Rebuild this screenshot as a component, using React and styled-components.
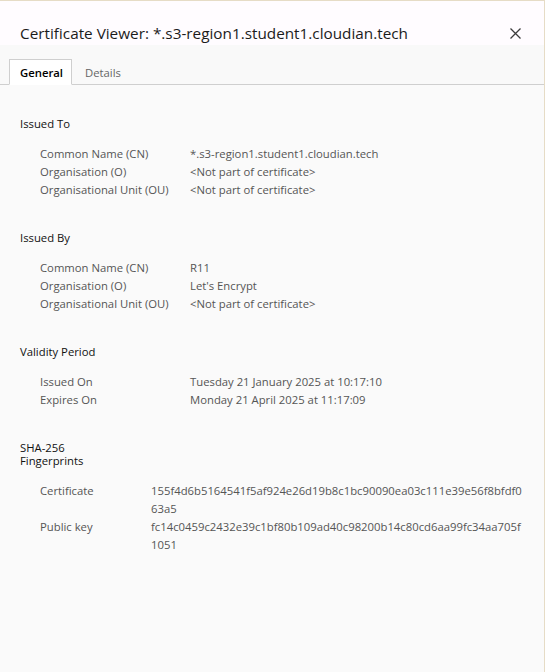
import styled, { createGlobalStyle } from "styled-components";

const GlobalStyle = createGlobalStyle`
  html, body {
    margin: 0;
    padding: 0;
    background: #fafafa;
  }
  * {
    box-sizing: border-box;
  }
`;

const sections = [
  {
    title: "Issued To",
    labelWidth: 150,
    rows: [
      ["Common Name (CN)", ["*.s3-region1.student1.cloudian.tech"]],
      ["Organisation (O)", ["<Not part of certificate>"]],
      ["Organisational Unit (OU)", ["<Not part of certificate>"]],
    ],
  },
  {
    title: "Issued By",
    labelWidth: 150,
    rows: [
      ["Common Name (CN)", ["R11"]],
      ["Organisation (O)", ["Let's Encrypt"]],
      ["Organisational Unit (OU)", ["<Not part of certificate>"]],
    ],
  },
  {
    title: "Validity Period",
    labelWidth: 150,
    rows: [
      ["Issued On", ["Tuesday 21 January 2025 at 10:17:10"]],
      ["Expires On", ["Monday 21 April 2025 at 11:17:09"]],
    ],
  },
  {
    title: "SHA-256 Fingerprints",
    labelWidth: 111,
    rows: [
      [
        "Certificate",
        ["155f4d6b5164541f5af924e26d19b8c1bc90090ea03c111e39e56f8bfdf0", "63a5"],
      ],
      [
        "Public key",
        ["fc14c0459c2432e39c1bf80b109ad40c98200b14c80cd6aa99fc34aa705f", "1051"],
      ],
    ],
  },
];

export default function App() {
  return (
    <>
      <GlobalStyle />
      <Dialog>
        <Header>
          <Title>Certificate Viewer: *.s3-region1.student1.cloudian.tech</Title>
          <CloseBtn aria-label="Close">
            <svg width="11" height="11" viewBox="0 0 11 11">
              <path d="M0.5 0.5 L10.5 10.5 M10.5 0.5 L0.5 10.5" stroke="#3c3c3c" strokeWidth="1.3" />
            </svg>
          </CloseBtn>
        </Header>
        <TabBar>
          <Tab $active>General</Tab>
          <Tab>Details</Tab>
        </TabBar>
        <Content>
          {sections.map((section) => (
            <Section key={section.title}>
              <Heading>{section.title}</Heading>
              <Rows>
                {section.rows.map(([label, lines]) => (
                  <Row key={label} $labelWidth={section.labelWidth}>
                    <Label>{label}</Label>
                    <Value>
                      {lines.map((line) => (
                        <ValueLine key={line}>{line}</ValueLine>
                      ))}
                    </Value>
                  </Row>
                ))}
              </Rows>
            </Section>
          ))}
        </Content>
      </Dialog>
    </>
  );
}

const Dialog = styled.div`
  width: 545px;
  height: 672px;
  display: flex;
  flex-direction: column;
  background: #fafafa;
  border-top: 1px solid #e6dcc6;
  border-right: 1px solid #e6dcc6;
  font-family: "Open Sans", "Noto Sans", sans-serif;
  overflow: hidden;
`;

const Header = styled.div`
  height: 44px;
  display: flex;
  align-items: center;
  justify-content: space-between;
  padding: 16px 22px 0 20px;
  background: #fffcff;
`;

const Title = styled.h1`
  margin: 4px 0 0;
  font-size: 15.3px;
  font-weight: 400;
  color: #1b1b1b;
`;

const CloseBtn = styled.button`
  width: 14px;
  height: 14px;
  padding: 0;
  border: none;
  background: none;
  display: flex;
  align-items: center;
  justify-content: center;
  margin-top: 4px;
`;

const TabBar = styled.div`
  height: 40px;
  display: flex;
  align-items: flex-end;
  padding-left: 9px;
  border-bottom: 1px solid #cfcfcf;
  background: #f9f9f9;
`;

const Tab = styled.div`
  height: 26px;
  padding: 0 ${(p) => (p.$active ? "8px 0 10px" : "12px")};
  margin-bottom: -1px;
  display: flex;
  align-items: center;
  font-size: 11.3px;
  color: ${(p) => (p.$active ? "#000" : "#666")};
  font-weight: ${(p) => (p.$active ? 600 : 400)};
  background: ${(p) => (p.$active ? "#fff" : "transparent")};
  border: 1px solid ${(p) => (p.$active ? "#cfcfcf" : "transparent")};
  border-bottom-color: ${(p) => (p.$active ? "#fff" : "transparent")};
`;

const Content = styled.div`
  padding: 32px 20px 0 20px;
  display: flex;
  flex-direction: column;
  gap: 32px;
`;

const Section = styled.section`
  display: flex;
  flex-direction: column;
  gap: 15px;
`;

const Heading = styled.h2`
  margin: 0;
  width: 90px;
  font-size: 11.3px;
  line-height: 13px;
  font-weight: 400;
  color: #111;
`;

const Rows = styled.div`
  display: flex;
  flex-direction: column;
  padding-left: 20px;
`;

const Row = styled.div`
  display: grid;
  grid-template-columns: ${(p) => p.$labelWidth}px 1fr;
  font-size: 11.3px;
  line-height: 18px;
  color: #555;
`;

const Label = styled.div``;

const Value = styled.div``;

const ValueLine = styled.div`
  white-space: nowrap;
`;
